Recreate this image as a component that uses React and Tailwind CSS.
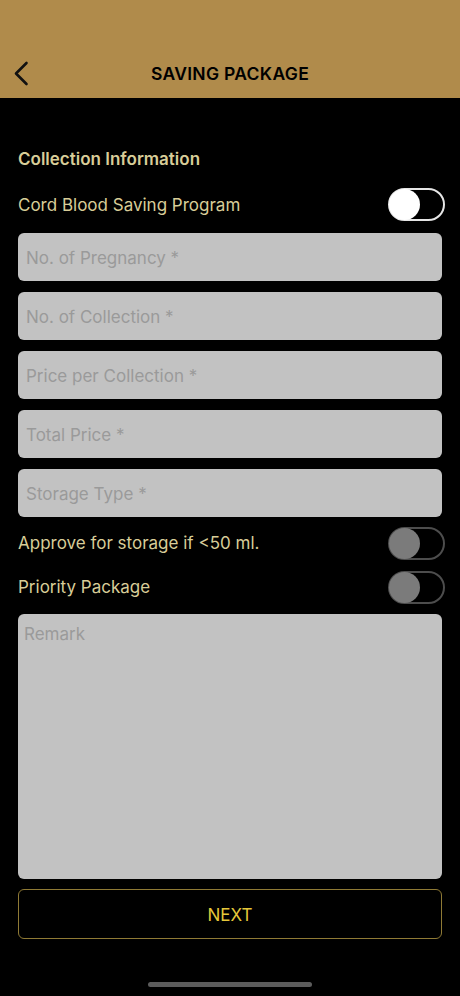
import React from "react";

function Toggle({ dim = false }) {
  return (
    <div
      className={`w-[57px] h-[33px] rounded-full border-2 flex items-center p-0 ${
        dim ? "border-[#4d4d4d]" : "border-[#e6e6e6]"
      }`}
    >
      <div
        className={`w-[31px] h-[31px] rounded-full -ml-[1px] ${
          dim ? "bg-[#7b7b7b]" : "bg-white"
        }`}
      />
    </div>
  );
}

function Field({ label }) {
  return (
    <div className="h-[48px] rounded-[6px] bg-[#c2c2c2] flex items-center px-[8px] pt-[3px]">
      <span className="text-[17px] text-[#9a9a9a]">{label}</span>
    </div>
  );
}

export default function App() {
  return (
    <div
      className="w-[460px] h-[996px] bg-black flex flex-col overflow-hidden"
      style={{ fontFamily: "Inter, 'Noto Sans', sans-serif" }}
    >
      <div className="h-[98px] bg-[#b08b4b] flex items-end pb-[11px] relative shrink-0">
        <div className="w-full flex items-center justify-center h-[26px]">
          <span className="text-[17.5px] font-semibold text-black tracking-[0.3px]">
            SAVING PACKAGE
          </span>
        </div>
        <svg
          className="absolute left-[12px] top-[61px]"
          width="20"
          height="26"
          viewBox="0 0 20 26"
          fill="none"
        >
          <path
            d="M14.5 2 L4 12.5 L14.5 23"
            stroke="#111"
            strokeWidth="2.6"
            strokeLinecap="round"
            strokeLinejoin="round"
          />
        </svg>
      </div>

      <div className="flex flex-col px-[18px] pt-[50px]">
        <div className="text-[17px] font-semibold text-[#d8cd98] leading-[22px]">
          Collection Information
        </div>
        <div className="flex items-center justify-between mt-[17px] h-[35px]">
          <span className="text-[17px] text-[#d8cd98] pt-[2px]">Cord Blood Saving Program</span>
          <div className="-mr-[3px]">
            <Toggle />
          </div>
        </div>
        <div className="flex flex-col gap-[11px] mt-[11px]">
          <Field label="No. of Pregnancy *" />
          <Field label="No. of Collection *" />
          <Field label="Price per Collection *" />
          <Field label="Total Price *" />
          <Field label="Storage Type *" />
        </div>
        <div className="flex items-center justify-between mt-[10px] h-[33px]">
          <span className="text-[17px] text-[#d8cd98] pt-[1px]">Approve for storage if &lt;50 ml.</span>
          <div className="-mr-[3px]">
            <Toggle dim />
          </div>
        </div>
        <div className="flex items-center justify-between mt-[11px] h-[33px]">
          <span className="text-[17px] text-[#d8cd98] pt-[1px]">Priority Package</span>
          <div className="-mr-[3px]">
            <Toggle dim />
          </div>
        </div>
        <div className="h-[265px] mt-[10px] rounded-[6px] bg-[#c2c2c2] px-[6px] pt-[8px]">
          <span className="text-[17px] text-[#9a9a9a]">Remark</span>
        </div>
        <div className="h-[50px] mt-[10px] rounded-[6px] border border-[#8f7a35] flex items-center justify-center pt-[3px]">
          <span className="text-[17px] text-[#e6c83a]">NEXT</span>
        </div>
      </div>
      <div className="flex justify-center mt-auto pb-[9px]">
        <div className="w-[164px] h-[5px] rounded-full bg-[#5c5c5c]" />
      </div>
    </div>
  );
}
